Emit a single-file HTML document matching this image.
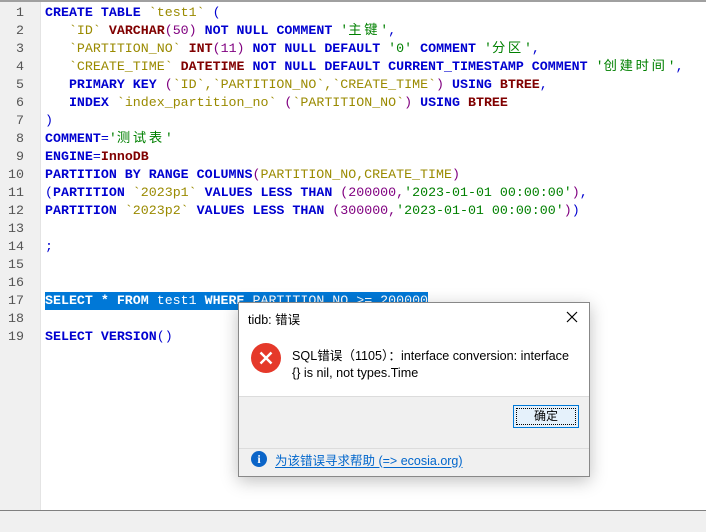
<!DOCTYPE html>
<html><head><meta charset="utf-8"><style>
*{margin:0;padding:0;box-sizing:border-box}
body{width:706px;height:532px;position:relative;background:#fff;overflow:hidden;font-family:"Liberation Sans","Noto Sans CJK SC",sans-serif}
.top{position:absolute;left:0;top:0;width:706px;height:2px;background:#a0a0a0}
.gut{position:absolute;left:0;top:2px;width:41px;height:508px;background:#f0f0f0;border-right:1px solid #e4e4e4}
.bot{position:absolute;left:0;top:510px;width:706px;height:22px;background:#f0f0f0;border-top:1px solid #808080}
.ln{position:absolute;left:0;top:4px;width:24px;text-align:right;font:13.3px/18px "Liberation Mono",monospace;color:#555}
.code{position:absolute;left:45px;top:4px;font:13.3px/18px "Liberation Mono","Noto Sans CJK SC",monospace;color:#000}
.code div{height:18px;white-space:pre;overflow:visible}
.k{color:#0000d0;font-weight:bold}.t{color:#800000;font-weight:bold}.i{color:#9a8a00}.s{color:#008000}.n{color:#800080}.p{color:#0000d0}
.c{letter-spacing:2.7px}
.sel{background:#0078d7;color:#fff;display:inline-block;height:18px}
.dlg{position:absolute;left:238px;top:302px;width:352px;height:175px;background:#f0f0f0;border:1px solid #888;box-shadow:0 4px 16px rgba(0,0,0,.25)}
.tb{height:94px;background:#fff;position:relative;border-bottom:1px solid #dcdcdc}
.ttl{position:absolute;left:9px;top:6px;font-size:12.5px;color:#000}
.x{position:absolute;left:327px;top:4px}
.ic{position:absolute;left:12px;top:40px;width:30px;height:30px;border-radius:50%;background:#e5392a}
.msg{position:absolute;left:53px;top:45px;font-size:12.6px;line-height:17px;color:#000;width:296px}
.btn{position:absolute;left:274px;top:102px;width:66px;height:23px;border:1px solid #0078d7;background:#e5f1fb;font-size:12px;text-align:center;line-height:21px}
.btn span{position:absolute;inset:2px;border:1px dotted #000}
.sep{position:absolute;left:0;top:145px;width:350px;height:1px;background:#dcdcdc}
.hl{position:absolute;left:12px;top:143px;height:26px;display:flex;align-items:center;font-size:12.5px;color:#0066cc}
.hl i{width:16px;height:16px;border-radius:50%;background:#0a64c8;color:#fff;font:bold 12px/16px "Liberation Serif",serif;text-align:center;margin-right:8px;font-style:normal}
.hl u{text-underline-offset:2px}
</style></head><body>
<div class="top"></div><div class="gut"></div>
<div class="ln">1<br>2<br>3<br>4<br>5<br>6<br>7<br>8<br>9<br>10<br>11<br>12<br>13<br>14<br>15<br>16<br>17<br>18<br>19</div>
<div class="code"><div><span class="k">CREATE TABLE</span> <span class="i">`test1`</span> <span class="p">(</span></div><div>   <span class="i">`ID`</span> <span class="t">VARCHAR</span><span class="n">(50)</span> <span class="k">NOT NULL COMMENT</span> <span class="s">'<span class="c">主键</span>'</span><span class="p">,</span></div><div>   <span class="i">`PARTITION_NO`</span> <span class="t">INT</span><span class="n">(11)</span> <span class="k">NOT NULL DEFAULT</span> <span class="s">'0'</span> <span class="k">COMMENT</span> <span class="s">'<span class="c">分区</span>'</span><span class="p">,</span></div><div>   <span class="i">`CREATE_TIME`</span> <span class="t">DATETIME</span> <span class="k">NOT NULL DEFAULT CURRENT_TIMESTAMP COMMENT</span> <span class="s">'<span class="c">创建时间</span>'</span><span class="p">,</span></div><div>   <span class="k">PRIMARY KEY</span> <span class="n">(</span><span class="i">`ID`,`PARTITION_NO`,`CREATE_TIME`</span><span class="n">)</span> <span class="k">USING</span> <span class="t">BTREE</span><span class="p">,</span></div><div>   <span class="k">INDEX</span> <span class="i">`index_partition_no`</span> <span class="n">(</span><span class="i">`PARTITION_NO`</span><span class="n">)</span> <span class="k">USING</span> <span class="t">BTREE</span></div><div><span class="p">)</span></div><div><span class="k">COMMENT</span><span class="p">=</span><span class="s">'<span class="c">测试表</span>'</span></div><div><span class="k">ENGINE</span><span class="p">=</span><span class="t">InnoDB</span></div><div><span class="k">PARTITION BY RANGE COLUMNS</span><span class="n">(</span><span class="i">PARTITION_NO,CREATE_TIME</span><span class="n">)</span></div><div><span class="p">(</span><span class="k">PARTITION</span> <span class="i">`2023p1`</span> <span class="k">VALUES LESS THAN</span> <span class="n">(200000,</span><span class="s">'2023-01-01 00:00:00'</span><span class="n">)</span><span class="p">,</span></div><div><span class="k">PARTITION</span> <span class="i">`2023p2`</span> <span class="k">VALUES LESS THAN</span> <span class="n">(300000,</span><span class="s">'2023-01-01 00:00:00'</span><span class="n">)</span><span class="p">)</span></div><div></div><div><span class="p">;</span></div><div></div><div></div><div><span class="sel"><b>SELECT * FROM</b> test1 <b>WHERE</b> PARTITION_NO &gt;= 200000</span></div><div></div><div><span class="k">SELECT VERSION</span><span class="p">()</span></div></div>
<div class="bot"></div>
<div class="dlg">
<div class="tb">
<div class="ttl">tidb: 错误</div>
<div class="x"><svg width="12" height="12" viewBox="0 0 12 12" style="margin-top:4px"><path d="M1 1L11 11M11 1L1 11" stroke="#000" stroke-width="1.2"/></svg></div>
<div class="ic"><svg width="30" height="30" viewBox="0 0 30 30"><path d="M9.5 9.5L20.5 20.5M20.5 9.5L9.5 20.5" stroke="#fff" stroke-width="2.4"/></svg></div>
<div class="msg">SQL错误（1105）：interface conversion: interface<br>{} is nil, not types.Time</div>
</div>
<div class="btn"><span></span>确定</div>
<div class="sep"></div>
<div class="hl"><i>i</i><u>为该错误寻求帮助 (=&gt; ecosia.org)</u></div>
</div>
</body></html>
